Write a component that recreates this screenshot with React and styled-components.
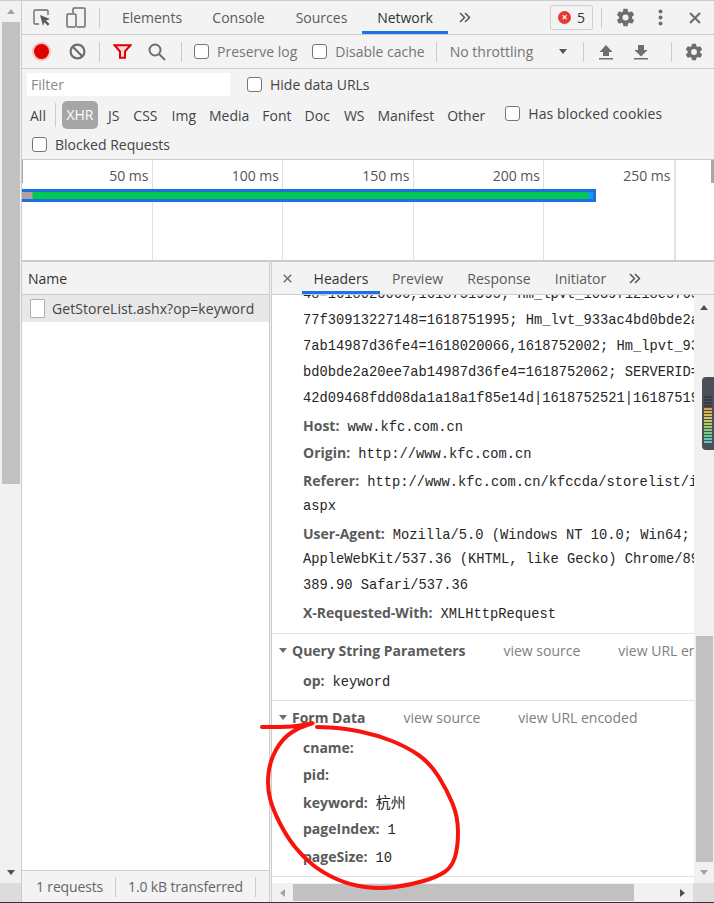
import React from 'react'
import styled, { createGlobalStyle } from 'styled-components'

const Global = createGlobalStyle`
  html, body { margin: 0; padding: 0; background: #f3f3f3; }
  body {
    width: 714px;
    height: 903px;
    overflow: hidden;
    font-family: "Open Sans", "Noto Sans", sans-serif;
    font-size: 14px;
    color: #5a5a5a;
  }
  * { box-sizing: border-box; }
`

const Page = styled.div`
  position: relative;
  display: flex;
  width: 714px;
  height: 903px;
  border-top: 1px solid #ccc;
  border-bottom: 1px solid #333;
  overflow: hidden;
`

const PageScroll = styled.div`
  width: 22px;
  flex: none;
  display: flex;
  flex-direction: column;
  align-items: center;
  background: #f1f1f1;
  border-right: 1px solid #ccc;
`

const ArrowBtn = styled.div`
  flex: none;
  width: ${p => p.$w || 20}px;
  height: ${p => p.$h || 21}px;
  display: flex;
  align-items: center;
  justify-content: center;
`

const Tri = styled.span`
  flex: none;
  width: 0;
  height: 0;
  border-style: solid;
  border-color: transparent;
  ${p => p.$dir === 'up' && `border-width: 0 4.5px 5px; border-bottom-color: ${p.$c || '#a3a3a3'};`}
  ${p => p.$dir === 'down' && `border-width: 5px 4.5px 0; border-top-color: ${p.$c || '#505050'};`}
  ${p => p.$dir === 'left' && `border-width: 4.5px 5px 4.5px 0; border-right-color: ${p.$c || '#a3a3a3'};`}
  ${p => p.$dir === 'right' && `border-width: 4.5px 0 4.5px 5px; border-left-color: ${p.$c || '#505050'};`}
`

const PageThumb = styled.div`
  width: 18px;
  height: 462px;
  flex: none;
  background: #c1c1c1;
`

const Spacer = styled.div`
  flex: 1;
`

const PageCorner = styled.div`
  width: 100%;
  height: 19px;
  flex: none;
  background: #dcdcdc;
`

const Main = styled.div`
  flex: 1;
  min-width: 0;
  display: flex;
  flex-direction: column;
`

const Bar = styled.div`
  display: flex;
  align-items: center;
  flex: none;
  height: ${p => p.$h}px;
  border-bottom: ${p => p.$line ? '1px solid #ccc' : 'none'};
  padding-left: ${p => p.$pad || 0}px;
`

const IconSlot = styled.div`
  flex: none;
  width: ${p => p.$w || 28}px;
  display: flex;
  align-items: center;
  justify-content: center;
`

const Sep = styled.div`
  flex: none;
  width: 1px;
  height: ${p => p.$h || 20}px;
  background: #ccc;
  margin: 0 ${p => p.$r || 0}px 0 ${p => p.$l || 0}px;
`

const Tab = styled.div`
  flex: none;
  height: 100%;
  display: flex;
  align-items: center;
  justify-content: center;
  width: ${p => p.$w}px;
  color: ${p => p.$on ? '#333' : '#5a5a5a'};
  border-bottom: ${p => p.$on ? '3px solid #1a73e8' : '3px solid transparent'};
  padding-top: 3px;
`

const ErrorBadge = styled.div`
  flex: none;
  width: 43px;
  height: 25px;
  margin-left: 69px;
  border: 1px solid #d0d0d0;
  border-radius: 2px;
  display: flex;
  align-items: center;
  justify-content: center;
  gap: 6px;
  color: #333;
`

const ErrDot = styled.span`
  width: 13px;
  height: 13px;
  border-radius: 50%;
  background: #e53935;
  color: #fff;
  font-size: 10px;
  line-height: 12px;
  font-weight: 700;
  text-align: center;
`

const Check = styled.label`
  flex: none;
  display: flex;
  align-items: center;
  gap: 8px;
  color: ${p => p.$dim ? '#757575' : '#444'};
  letter-spacing: ${p => p.$ls || 0}px;
  margin-left: ${p => p.$ml || 0}px;
  margin-bottom: ${p => p.$mb || 0}px;
`

const Box = styled.span`
  flex: none;
  width: 15px;
  height: 15px;
  background: #fff;
  border: 1px solid #767676;
  border-radius: 3px;
`

const FilterInput = styled.div`
  flex: none;
  width: 203px;
  height: 23px;
  background: #fff;
  color: #8a8a8a;
  padding: 0 4px;
  line-height: 23px;
`

const Throttle = styled.span`
  flex: none;
  width: 109.5px;
  color: #757575;
`

const TypeBtn = styled.span`
  flex: none;
  color: #444;
  margin-right: ${p => p.$mr}px;
`

const TypeOn = styled.span`
  flex: none;
  width: 36px;
  height: 28px;
  line-height: 28px;
  text-align: center;
  color: #fff;
  background: #a6a6a6;
  border-radius: 5px;
  margin-right: 10px;
`

const Overview = styled.div`
  position: relative;
  flex: none;
  height: 102px;
  background: #fff;
  display: flex;
  border-bottom: 2px solid #ccc;
`

const Tick = styled.div`
  flex: none;
  width: ${p => p.$w}px;
  border-right: 1px solid #e0e0e0;
  text-align: right;
  padding: 6px 3px 0 0;
  color: #555;
`

const OverviewRest = styled.div`
  flex: 1;
  border-left: 1px solid #e0e0e0;
`

const Handle = styled.div`
  position: absolute;
  top: 0;
  ${p => p.$right ? 'right: 0;' : 'left: 0;'}
  width: ${p => p.$right ? 3 : 1}px;
  height: 23px;
  background: #a8a8a8;
`

const TimeBar = styled.div`
  position: absolute;
  left: 0;
  top: 29px;
  width: 574px;
  height: 13px;
  border: 3px solid #1f6fe0;
  border-left: 0;
  background: linear-gradient(90deg, #b0a3a3 0, #b0a3a3 10px, #00c853 11px, #00c853 566px, #0f9ef0 566px);
`

const Split = styled.div`
  flex: 1;
  min-height: 0;
  display: flex;
`

const NamePanel = styled.div`
  flex: none;
  width: 248px;
  display: flex;
  flex-direction: column;
  border-right: 1px solid #ccc;
`

const NameHead = styled.div`
  flex: none;
  height: 33px;
  display: flex;
  align-items: center;
  padding-left: 6px;
  color: #333;
  border-bottom: 1px solid #ccc;
`

const NameRow = styled.div`
  flex: none;
  height: 27px;
  display: flex;
  align-items: center;
  background: #e8e8e8;
  padding-left: 8px;
  gap: 7px;
  color: #444;
  letter-spacing: 0.05px;
  white-space: nowrap;
`

const FileIcon = styled.span`
  flex: none;
  width: 15px;
  height: 19px;
  background: #fff;
  border: 1px solid #b0b0b0;
  border-radius: 1px;
`

const NameBody = styled.div`
  flex: 1;
  background: #fff;
`

const Status = styled.div`
  flex: none;
  height: 32px;
  display: flex;
  align-items: center;
  border-top: 1px solid #ccc;
  color: #666;
  padding-left: 14px;
  letter-spacing: -0.15px;
  white-space: nowrap;
`

const StatusSep = styled.span`
  flex: none;
  width: 1px;
  height: 20px;
  background: #ccc;
  margin: 0 12px;
`

const DetailPanel = styled.div`
  flex: 1;
  min-width: 0;
  display: flex;
  flex-direction: column;
  margin-left: 1px;
  border-left: 1px solid #ccc;
`

const DetailTabs = styled.div`
  flex: none;
  height: 33px;
  display: flex;
  align-items: center;
  border-bottom: 1px solid #ccc;
`

const DetailBody = styled.div`
  flex: 1;
  min-height: 0;
  display: flex;
`

const Content = styled.div`
  flex: 1;
  min-width: 0;
  background: #fff;
  overflow: hidden;
`

const HeaderBlock = styled.div`
  height: 352px;
  margin-top: -13px;
  padding-left: 31px;
  border-bottom: 1px solid #e0e0e0;
`

const Line = styled.div`
  height: ${p => p.$h}px;
  line-height: ${p => p.$h}px;
  white-space: nowrap;
  font-family: "Liberation Mono", monospace;
  font-size: 13.75px;
  color: #262626;
`

const Key = styled.span`
  font-family: "Open Sans", "Noto Sans", sans-serif;
  font-size: 14px;
  font-weight: 700;
  color: #5a5a5a;
  margin-right: 8px;
`

const Cjk = styled.span`
  font-family: "Noto Sans CJK SC", sans-serif;
  font-size: 15px;
`

const Section = styled.div`
  border-bottom: 1px solid #e0e0e0;
  padding-left: 31px;
  height: ${p => p.$h}px;
`

const SectionHead = styled.div`
  height: 34px;
  padding-bottom: 2px;
  display: flex;
  align-items: center;
  margin-left: -24px;
  font-weight: 700;
  white-space: nowrap;
  color: #5a5a5a;
  gap: 5px;
`

const ViewLink = styled.span`
  font-weight: 400;
  color: #808080;
  margin-left: 33px;
`

const VScroll = styled.div`
  flex: none;
  width: 20px;
  background: #f1f1f1;
  display: flex;
  flex-direction: column;
  align-items: center;
`

const VThumb = styled.div`
  flex: none;
  width: 17px;
  height: 226px;
  background: #c1c1c1;
`

const HScroll = styled.div`
  flex: none;
  height: 19px;
  display: flex;
  align-items: center;
  background: #f1f1f1;
`

const HThumb = styled.div`
  flex: none;
  width: 341px;
  height: 17px;
  background: #c1c1c1;
`

const Corner = styled.div`
  flex: none;
  width: 21px;
  height: 100%;
  background: #dcdcdc;
`

const Meter = styled.div`
  position: absolute;
  right: 0;
  top: 376px;
  width: 12px;
  height: 73px;
  background: #4b4f59;
  border-radius: 4px 0 0 4px;
  display: flex;
  flex-direction: column;
  justify-content: flex-end;
  gap: 1px;
  padding: 4px 2px 7px 2px;
`

const MeterTick = styled.i`
  display: block;
  flex: none;
  height: 2px;
  background: ${p => p.$c};
`

const Scribble = styled.svg`
  position: absolute;
  left: 0;
  top: -1px;
  pointer-events: none;
`

const RecordDot = styled.span`
  width: 15px;
  height: 15px;
  border-radius: 50%;
  background: #e00000;
  box-shadow: 0 0 0 2px #f4c4c4;
`

const Gear = ({ size = 20, color = '#6e6e6e' }) => (
  <svg width={size} height={size} viewBox='0 0 24 24'>
    <path fill={color} d='M19.4 13c.05-.33.1-.66.1-1s-.05-.67-.1-1l2.1-1.65c.2-.15.25-.42.12-.64l-2-3.46c-.12-.22-.39-.3-.61-.22l-2.49 1c-.52-.4-1.08-.73-1.69-.98l-.38-2.65A.49.49 0 0 0 14 2h-4c-.25 0-.46.18-.49.42l-.38 2.65c-.61.25-1.17.59-1.69.98l-2.49-1c-.23-.09-.49 0-.61.22l-2 3.46c-.13.22-.07.49.12.64L4.56 11c-.04.33-.07.67-.07 1s.03.67.07 1l-2.1 1.65c-.2.15-.25.42-.12.64l2 3.46c.12.22.39.3.61.22l2.49-1c.52.4 1.08.73 1.69.98l.38 2.65c.03.24.24.42.49.42h4c.25 0 .46-.18.49-.42l.38-2.65c.61-.25 1.17-.59 1.69-.98l2.49 1c.23.09.49 0 .61-.22l2-3.46c.12-.22.07-.49-.12-.64L19.4 13zM12 15.5a3.5 3.5 0 1 1 0-7 3.5 3.5 0 0 1 0 7z' />
  </svg>
)

const Chevrons = () => (
  <svg width='12' height='11' viewBox='0 0 12 11' fill='none' stroke='#555' strokeWidth='1.5'>
    <path d='M1 1l4.5 4.5L1 10M6 1l4.5 4.5L6 10' />
  </svg>
)

const Inspect = () => (
  <svg width='18' height='18' viewBox='0 0 18 18'>
    <path d='M6 15H2a1 1 0 0 1-1-1V2a1 1 0 0 1 1-1h12a1 1 0 0 1 1 1v4' fill='none' stroke='#6e6e6e' strokeWidth='1.4' />
    <path d='M7 6l10 4-4 1.5 3.5 3.5-1.7 1.7-3.5-3.5L10 17z' fill='#5a5a5a' />
  </svg>
)

const Device = () => (
  <svg width='20' height='21' viewBox='0 0 20 21' fill='none' stroke='#6e6e6e' strokeWidth='1.5'>
    <path d='M7 6V2a1 1 0 0 1 1-1h10a1 1 0 0 1 1 1v17a1 1 0 0 1-1 1H11' />
    <rect x='1' y='7' width='9' height='13' rx='1' />
  </svg>
)

const Block = () => (
  <svg width='17' height='17' viewBox='0 0 17 17' fill='none' stroke='#6e6e6e' strokeWidth='2.2'>
    <circle cx='8.5' cy='8.5' r='6.9' />
    <path d='M3.8 3.8l9.4 9.4' />
  </svg>
)

const Funnel = () => (
  <svg width='19' height='15' viewBox='0 0 19 15' fill='#f6dada' stroke='#e00000' strokeWidth='2'>
    <path d='M1.5 1.2h16L12 7.5v6.3H7V7.5z' />
  </svg>
)

const Search = () => (
  <svg width='18' height='18' viewBox='0 0 18 18' fill='none' stroke='#6e6e6e' strokeWidth='2'>
    <circle cx='7' cy='7' r='5.5' />
    <path d='M11 11l6 6' />
  </svg>
)

const Upload = () => (
  <svg width='14' height='16' viewBox='0 0 14 16' fill='#6e6e6e'>
    <path d='M7 1l6.5 7H10v4H4V8H.5zM0 14h14v1.5H0z' />
  </svg>
)

const Download = () => (
  <svg width='14' height='16' viewBox='0 0 14 16' fill='#6e6e6e'>
    <path d='M4 1h6v5h3.5L7 12.5.5 6H4zM0 14h14v1.5H0z' />
  </svg>
)

const Cross = ({ size = 12, w = 2.2 }) => (
  <svg width={size} height={size} viewBox='0 0 12 12' fill='none' stroke='#6e6e6e' strokeWidth={w}>
    <path d='M1 1l10 10M11 1L1 11' />
  </svg>
)

const Dots = () => (
  <svg width='5' height='17' viewBox='0 0 5 17' fill='#6e6e6e'>
    <circle cx='2.5' cy='2.5' r='2' />
    <circle cx='2.5' cy='8.5' r='2' />
    <circle cx='2.5' cy='14.5' r='2' />
  </svg>
)

const ticks = ['50 ms', '100 ms', '150 ms', '200 ms', '250 ms']
const types = [
  ['JS', 14], ['CSS', 14], ['Img', 13], ['Media', 13], ['Font', 13], ['Doc', 14], ['WS', 13], ['Manifest', 13], ['Other', 20]
]
const meterColors = [
  '#3a3d45', '#3a3d45', '#3a3d45', '#3a3d45', '#e0a040', '#e0b048', '#d8c050', '#d0c858', '#c0cc60',
  '#a8cc68', '#98cc70', '#88cc78', '#78cc88', '#68cc98', '#60cca8', '#58ccb8'
]

// hand-drawn circle, points go round it clockwise from the left end of the stroke
const scribblePoints = [
  [262, 727], [283, 727], [300, 726], [317, 722], [300, 727], [283, 738], [270, 760], [267, 787],
  [273, 810], [287, 837], [303, 857], [323, 873], [350, 885], [380, 889], [410, 885], [437, 877],
  [452, 867], [458, 847], [458, 817], [447, 790], [430, 763], [407, 747], [377, 735], [343, 728], [317, 727]
]

function smoothPath (pts) {
  let d = `M${pts[0][0]} ${pts[0][1]}`
  for (let i = 1; i < pts.length - 1; i++) {
    const mx = (pts[i][0] + pts[i + 1][0]) / 2
    const my = (pts[i][1] + pts[i + 1][1]) / 2
    d += `Q${pts[i][0]} ${pts[i][1]} ${mx} ${my}`
  }
  const last = pts[pts.length - 1]
  return `${d}L${last[0]} ${last[1]}`
}

export default function App () {
  return (
    <>
      <Global />
      <Page>
        <PageScroll>
          <ArrowBtn><Tri $dir='up' /></ArrowBtn>
          <PageThumb />
          <Spacer />
          <ArrowBtn><Tri $dir='down' /></ArrowBtn>
          <PageCorner />
        </PageScroll>
        <Main>
          <Bar $h={34} $line $pad={10}>
            <IconSlot $w={20}><Inspect /></IconSlot>
            <IconSlot $w={47}><Device /></IconSlot>
            <Sep $r={8} />
            <Tab $w={88}>Elements</Tab>
            <Tab $w={85}>Console</Tab>
            <Tab $w={81}>Sources</Tab>
            <Tab $w={86} $on>Network</Tab>
            <IconSlot $w={33}><Chevrons /></IconSlot>
            <ErrorBadge><ErrDot>×</ErrDot>5</ErrorBadge>
            <Sep $l={8} $r={8} />
            <IconSlot $w={30}><Gear size={21} /></IconSlot>
            <IconSlot $w={40}><Dots /></IconSlot>
            <IconSlot $w={30}><Cross size={12} /></IconSlot>
          </Bar>
          <Bar $h={34} $line>
            <IconSlot $w={38}><RecordDot /></IconSlot>
            <IconSlot $w={34}><Block /></IconSlot>
            <Sep $l={5} />
            <IconSlot $w={44}><Funnel /></IconSlot>
            <IconSlot $w={26}><Search /></IconSlot>
            <Sep $l={11} $r={12} />
            <Check $dim><Box />Preserve log</Check>
            <Check $ml={15} $dim><Box />Disable cache</Check>
            <Sep $l={11} $r={13} />
            <Throttle>No throttling</Throttle>
            <Tri $dir='down' $c='#555' />
            <Sep $l={16} />
            <IconSlot $w={44}><Upload /></IconSlot>
            <IconSlot $w={26}><Download /></IconSlot>
            <Sep $l={17} />
            <IconSlot $w={44}><Gear size={20} /></IconSlot>
          </Bar>
          <Bar $h={31} $pad={5}>
            <FilterInput>Filter</FilterInput>
            <Check $ml={17}><Box />Hide data URLs</Check>
          </Bar>
          <Bar $h={30} $pad={8}>
            <TypeBtn $mr={9}>All</TypeBtn>
            <Sep $h={24} $r={6} />
            <TypeOn>XHR</TypeOn>
            {types.map(([t, m]) => <TypeBtn key={t} $mr={m}>{t}</TypeBtn>)}
            <Check $ls={0.1} $mb={4}><Box />Has blocked cookies</Check>
          </Bar>
          <Bar $h={30} $line $pad={10}>
            <Check><Box />Blocked Requests</Check>
          </Bar>
          <Overview>
            {ticks.map(t => <Tick key={t} $w={130.5}>{t}</Tick>)}
            <OverviewRest />
            <Handle />
            <Handle $right />
            <TimeBar />
          </Overview>
          <Split>
            <NamePanel>
              <NameHead>Name</NameHead>
              <NameRow><FileIcon />GetStoreList.ashx?op=keyword</NameRow>
              <NameBody />
              <Status>
                1 requests
                <StatusSep />
                1.0 kB transferred
                <StatusSep />
              </Status>
            </NamePanel>
            <DetailPanel>
              <DetailTabs>
                <IconSlot $w={30}><Cross size={9} w={2} /></IconSlot>
                <Tab $w={78} $on>Headers</Tab>
                <Tab $w={75}>Preview</Tab>
                <Tab $w={88}>Response</Tab>
                <Tab $w={75}>Initiator</Tab>
                <IconSlot $w={34}><Chevrons /></IconSlot>
              </DetailTabs>
              <DetailBody>
                <Content>
                  <HeaderBlock>
                    <Line $h={26}>48=1618020066,1618751995; Hm_lpvt_1039f1218e57655b6</Line>
                    <Line $h={26}>77f30913227148=1618751995; Hm_lvt_933ac4bd0bde2a20ee</Line>
                    <Line $h={26}>7ab14987d36fe4=1618020066,1618752002; Hm_lpvt_933ac4</Line>
                    <Line $h={26}>bd0bde2a20ee7ab14987d36fe4=1618752062; SERVERID=b7b5</Line>
                    <Line $h={26}>42d09468fdd08da1a18a1f85e14d|1618752521|1618751995</Line>
                    <Line $h={27}><Key>Host:</Key>www.kfc.com.cn</Line>
                    <Line $h={28}><Key>Origin:</Key>http://www.kfc.com.cn</Line>
                    <Line $h={27}><Key>Referer:</Key>http://www.kfc.com.cn/kfccda/storelist/index.</Line>
                    <Line $h={26}>aspx</Line>
                    <Line $h={27}><Key>User-Agent:</Key>Mozilla/5.0 (Windows NT 10.0; Win64; x64)</Line>
                    <Line $h={26}>AppleWebKit/537.36 (KHTML, like Gecko) Chrome/89.0.4</Line>
                    <Line $h={26}>389.90 Safari/537.36</Line>
                    <Line $h={27}><Key>X-Requested-With:</Key>XMLHttpRequest</Line>
                  </HeaderBlock>
                  <Section $h={67}>
                    <SectionHead>
                      <Tri $dir='down' $c='#6e6e6e' />
                      Query String Parameters
                      <ViewLink>view source</ViewLink>
                      <ViewLink>view URL encoded</ViewLink>
                    </SectionHead>
                    <Line $h={26}><Key>op:</Key>keyword</Line>
                  </Section>
                  <Section $h={176}>
                    <SectionHead>
                      <Tri $dir='down' $c='#6e6e6e' />
                      Form Data
                      <ViewLink>view source</ViewLink>
                      <ViewLink>view URL encoded</ViewLink>
                    </SectionHead>
                    <Line $h={26}><Key>cname:</Key></Line>
                    <Line $h={27}><Key>pid:</Key></Line>
                    <Line $h={27}><Key>keyword:</Key><Cjk>杭州</Cjk></Line>
                    <Line $h={28}><Key>pageIndex:</Key>1</Line>
                    <Line $h={27}><Key>pageSize:</Key>10</Line>
                  </Section>
                </Content>
                <VScroll>
                  <ArrowBtn $h={24}><Tri $dir='up' $c='#505050' /></ArrowBtn>
                  <Spacer />
                  <VThumb />
                  <ArrowBtn $h={21}><Tri $dir='down' $c='#a3a3a3' /></ArrowBtn>
                </VScroll>
              </DetailBody>
              <HScroll>
                <ArrowBtn $w={21} $h={19}><Tri $dir='left' /></ArrowBtn>
                <HThumb />
                <Spacer />
                <ArrowBtn $w={21} $h={19}><Tri $dir='right' /></ArrowBtn>
                <Corner />
              </HScroll>
            </DetailPanel>
          </Split>
        </Main>
        <Meter>
          {meterColors.map((c, i) => <MeterTick key={i} $c={c} />)}
        </Meter>
        <Scribble width='714' height='903' viewBox='0 0 714 903' fill='none' stroke='#f8140c' strokeWidth='4' strokeLinecap='round' strokeLinejoin='round'>
          <path d={smoothPath(scribblePoints)} />
        </Scribble>
      </Page>
    </>
  )
}
